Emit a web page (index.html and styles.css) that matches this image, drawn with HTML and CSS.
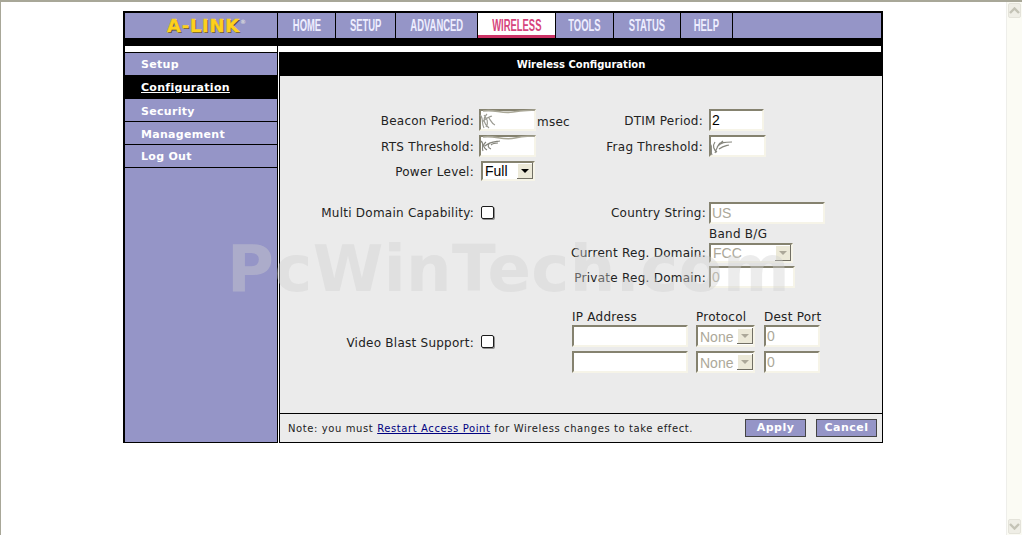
FILE: index.html
```html
<!DOCTYPE html>
<html lang="en">
<head>
  <meta charset="UTF-8">
  <title>Wireless Configuration</title>
  <link rel="stylesheet" href="styles.css">
</head>
<body>
  <div class="viewport">
    <div class="page">
      <div class="frame">

        <!-- Top bar -->
        <div class="topbar">
          <div class="logo">A-LINK<sup>&reg;</sup></div>
          <div class="tabs">
            <a class="tab tab-home"><span>HOME</span></a>
            <a class="tab tab-setup"><span>SETUP</span></a>
            <a class="tab tab-advanced"><span>ADVANCED</span></a>
            <a class="tab tab-wireless active"><span>WIRELESS</span></a>
            <a class="tab tab-tools"><span>TOOLS</span></a>
            <a class="tab tab-status"><span>STATUS</span></a>
            <a class="tab tab-help"><span>HELP</span></a>
            <div class="tab-rest"></div>
          </div>
        </div>
        <div class="strip"><div class="strip-left"></div></div>

        <div class="main">
          <!-- Side menu -->
          <div class="sidebar">
            <a class="side-item first">Setup</a>
            <a class="side-item current">Configuration</a>
            <a class="side-item low">Security</a>
            <a class="side-item low">Management</a>
            <a class="side-item">Log Out</a>
          </div>

          <div class="panel">
            <div class="title">Wireless Configuration</div>

            <div class="content">
              <div class="watermark">PcWinTech.com</div>

              <div class="section-top">
                <div class="row">
                  <label class="label-a">Beacon Period:</label>
                  <span class="scribble-wrap">
                    <input class="field w-57" type="text">
                    <svg class="scribble" width="57" height="22" viewBox="0 0 57 22"><path d="M4 2C16 0 22 5 34 3S48 2 56 1" fill="none" stroke="#a9a797" stroke-width="1.6"/><path d="M1 6C5 9 2 14 5 19M8 5C3 10 5 15 10 19M3 13C8 8 10 8 13 7M5 6C8 10 10 13 7 18M10 9C12 12 13 15 16 16" fill="none" stroke="#9b9b93" stroke-width="1.2"/></svg>
                  </span>
                  <span class="unit">msec</span>
                  <label class="label-b">DTIM Period:</label>
                  <input class="field w-55" type="text" value="2">
                </div>
                <div class="row">
                  <label class="label-a">RTS Threshold:</label>
                  <span class="scribble-wrap">
                    <input class="field w-57" type="text">
                    <svg class="scribble" width="57" height="22" viewBox="0 0 57 22"><path d="M4 2C16 0 24 6 36 3S48 2 56 1" fill="none" stroke="#a9a797" stroke-width="1.6"/><path d="M2 6C6 9 2 12 4 16M7 7C3 10 5 13 8 15M6 11C10 7 15 7 21 6M11 8C8 10 9 13 12 14M12 10C14 8 17 8 19 8" fill="none" stroke="#85857c" stroke-width="1.2"/></svg>
                  </span>
                  <span class="unit"></span>
                  <label class="label-b">Frag Threshold:</label>
                  <span class="scribble-wrap">
                    <input class="field w-57" type="text">
                    <svg class="scribble" width="57" height="22" viewBox="0 0 57 22"><path d="M1 8C4 12 1 16 3 20M6 7C3 11 5 15 8 17M8 12C12 7 16 7 23 7M10 14C14 11 16 11 20 10M11 8C8 11 8 13 6 18M14 6C12 8 10 9 9 11" fill="none" stroke="#85857c" stroke-width="1.2"/></svg>
                  </span>
                </div>
                <div class="row row-short">
                  <label class="label-a">Power Level:</label>
                  <div class="select-wrap power">
                    <select class="select"><option>Full</option></select>
                    <span class="select-btn"></span>
                  </div>
                </div>
              </div>

              <div class="section-domain">
                <div class="check-side">
                  <label class="label-a">Multi Domain Capability:</label>
                  <input class="check" type="checkbox">
                </div>
                <div class="domain-side">
                  <div class="domain-row">
                    <label class="label-c">Country String:</label>
                    <input class="field w-116 off" type="text" value="US" disabled>
                  </div>
                  <div class="band">Band B/G</div>
                  <div class="domain-row">
                    <label class="label-c">Current Reg. Domain:</label>
                    <div class="select-wrap fcc">
                      <select class="select" disabled><option>FCC</option></select>
                      <span class="select-btn off"></span>
                    </div>
                  </div>
                  <div class="domain-row private">
                    <label class="label-c">Private Reg. Domain:</label>
                    <input class="field w-86 off" type="text" value="0" disabled>
                  </div>
                </div>
              </div>

              <div class="section-video">
                <div class="check-side">
                  <label class="label-a">Video Blast Support:</label>
                  <input class="check" type="checkbox">
                </div>
                <div class="video-grid">
                  <div class="col-head">IP Address</div>
                  <div class="col-head">Protocol</div>
                  <div class="col-head">Dest Port</div>
                  <input class="field w-116" type="text">
                  <div class="select-wrap proto">
                    <select class="select" disabled><option>None</option></select>
                    <span class="select-btn off"></span>
                  </div>
                  <input class="field w-56 off" type="text" value="0" disabled>
                  <input class="field w-116" type="text">
                  <div class="select-wrap proto">
                    <select class="select" disabled><option>None</option></select>
                    <span class="select-btn off"></span>
                  </div>
                  <input class="field w-56 off" type="text" value="0" disabled>
                </div>
              </div>
            </div>

            <div class="footer">
              <div class="note">Note: you must <a href="#">Restart Access Point</a> for Wireless changes to take effect.</div>
              <button class="btn">Apply</button>
              <button class="btn">Cancel</button>
            </div>
          </div>
        </div>
      </div>
    </div>

    <!-- Scrollbar -->
    <div class="scrollbar">
      <div class="scroll-btn"><svg width="11" height="7" viewBox="0 0 11 7"><path d="M1 6L5.5 1.5L10 6" fill="none" stroke="#c4c3b6" stroke-width="2.4"/></svg></div>
      <div class="scroll-track"></div>
      <div class="scroll-btn"><svg width="11" height="7" viewBox="0 0 11 7"><path d="M1 1L5.5 5.5L10 1" fill="none" stroke="#c4c3b6" stroke-width="2.4"/></svg></div>
    </div>
  </div>
</body>
</html>
```

FILE: styles.css
```css
/* General */
html, body {
  margin: 0;
  padding: 0;
  height: 100%;
  overflow: hidden;
  background-color: #fff;
}

body {
  font-family: "DejaVu Sans", Verdana, sans-serif;
  font-size: 12px;
  letter-spacing: 0.25px;
  color: #222;
}

.viewport {
  display: flex;
  height: 533px;
  border-top: 2px solid #a8a798;
  border-left: 1px solid #a8a798;
}

.page {
  flex: 1;
  padding: 9px 0 0 122px;
}

.frame {
  width: 760px;
  height: 432px;
  display: flex;
  flex-direction: column;
}

/* Top bar */
.topbar {
  display: flex;
  height: 25px;
  padding-bottom: 8px;
  background-color: #000;
  border: 2px solid #000;
  border-bottom: none;
}

.logo {
  box-sizing: border-box;
  width: 152px;
  padding-left: 11px;
  background-color: #9595c7;
  text-align: center;
  font-family: "DejaVu Sans", sans-serif;
  font-weight: bold;
  font-size: 18px;
  line-height: 25px;
  letter-spacing: 0.7px;
  color: #fdd11c;
  text-shadow: 1px 1px 0 #4f4a38;
  -webkit-text-stroke: 0.4px #fdd11c;
}

.logo sup {
  font-size: 6px;
  line-height: 0;
  color: #ddd;
  letter-spacing: 0;
  text-shadow: none;
  -webkit-text-stroke: 0;
  vertical-align: 8px;
}

.tabs {
  flex: 1;
  display: flex;
  gap: 1px;
  margin-left: 1px;
}

.tab {
  display: flex;
  justify-content: center;
  box-sizing: border-box;
  height: 25px;
  background-color: #9595c7;
  color: #eef;
  font-family: "Liberation Sans", Arial, sans-serif;
  font-weight: bold;
  font-size: 16px;
  line-height: 26px;
  letter-spacing: 0;
  white-space: nowrap;
}

.tab span {
  display: block;
  flex: none;
  transform: scaleX(0.59);
}

.tab-home { width: 57px; }
.tab-setup { width: 59px; }
.tab-advanced { width: 81px; }
.tab-wireless { width: 77px; }
.tab-tools { width: 57px; }
.tab-status { width: 66px; }
.tab-help { width: 51px; }

.tab.active {
  background-color: #fff;
  color: #d6457c;
  border-bottom: 3px solid #cc3366;
}

.tab-rest {
  flex: 1;
  background-color: #9595c7;
}

.strip {
  height: 6px;
  background-color: #fff;
  border-left: 2px solid #000;
  border-right: 2px solid #000;
}

.strip-left {
  width: 152px;
  height: 6px;
  border-right: 1px solid #000;
}

/* Side menu */
.main {
  flex: 1;
  display: flex;
  background-color: #fff;
}

.sidebar {
  width: 152px;
  background-color: #9595c7;
  border-left: 2px solid #000;
  border-right: 1px solid #000;
  border-bottom: 1px solid #000;
  font-weight: bold;
  font-size: 11px;
  letter-spacing: 0.3px;
}

.side-item {
  display: flex;
  align-items: center;
  box-sizing: border-box;
  height: 23px;
  padding-left: 16px;
  padding-top: 1px;
  color: #fff;
  border-bottom: 1px solid #000;
}

.side-item.low {
  padding-top: 3px;
}

.side-item.first {
  height: 23px;
  padding-top: 0;
  border-top: 1px solid #000;
  border-bottom: none;
}

.side-item.current {
  height: 24px;
  padding-top: 0;
  background-color: #000;
  text-decoration: underline;
  border-bottom: none;
}

/* Main panel */
.panel {
  flex: 1;
  display: flex;
  flex-direction: column;
  margin-left: 1px;
  background-color: #ebebeb;
  border-left: 1px solid #000;
  border-right: 1px solid #000;
  border-bottom: 1px solid #000;
}

.title {
  height: 24px;
  margin-left: -1px;
  margin-right: -1px;
  background-color: #000;
  color: #fff;
  text-align: center;
  font-weight: bold;
  font-size: 10px;
  line-height: 26px;
  letter-spacing: 0;
}

.content {
  flex: 1;
  position: relative;
  padding-top: 31px;
}

.watermark {
  position: absolute;
  top: 153px;
  left: -53px;
  font-family: "DejaVu Sans", sans-serif;
  font-weight: bold;
  font-size: 64px;
  line-height: 80px;
  letter-spacing: 0.4px;
  white-space: nowrap;
  color: rgba(208, 208, 208, 0.4);
  pointer-events: none;
  z-index: 2;
}

.row {
  display: flex;
  align-items: center;
  height: 26px;
}

.row-short {
  height: 24px;
}

.label-a {
  width: 194px;
  margin-right: 5px;
  padding-top: 2px;
  text-align: right;
  flex: none;
  white-space: nowrap;
}

.label-b {
  width: 132px;
  margin-right: 6px;
  padding-top: 2px;
  text-align: right;
}

.label-c {
  width: 170px;
  margin-right: 3px;
  text-align: right;
  white-space: nowrap;
}

.private .label-c {
  padding-top: 2px;
}

.unit {
  width: 34px;
  margin-left: 1px;
  padding-top: 3px;
}

/* Form controls */
.field {
  box-sizing: border-box;
  height: 22px;
  margin: 0;
  padding: 0 1px;
  border: 2px solid;
  border-color: #85826f #f6f4e8 #f6f4e8 #85826f;
  background-color: #fff;
  font-family: "Liberation Sans", Arial, sans-serif;
  font-size: 14px;
  color: #000;
  border-radius: 0;
  outline: none;
}

.field.off {
  color: #aca899;
}

.w-55 { width: 55px; }
.w-56 { width: 56px; }
.w-57 { width: 57px; }
.w-86 { width: 86px; }
.w-116 { width: 116px; }

.scribble-wrap {
  position: relative;
  display: block;
  height: 22px;
}

.scribble {
  position: absolute;
  top: 0;
  left: 0;
}

.select-wrap {
  position: relative;
  box-sizing: border-box;
  height: 20px;
  border: 2px solid;
  border-color: #85826f #f6f4e8 #f6f4e8 #85826f;
  background-color: #fff;
}

.select {
  display: block;
  width: 100%;
  height: 16px;
  padding: 0 0 0 2px;
  border: none;
  outline: none;
  appearance: none;
  -webkit-appearance: none;
  background: transparent;
  font-family: "Liberation Sans", Arial, sans-serif;
  font-size: 14px;
  line-height: 16px;
  color: #000;
  opacity: 1;
}

.select:disabled {
  color: #aca899;
}

.select-btn {
  position: absolute;
  top: 0;
  right: 0;
  width: 16px;
  height: 16px;
  box-sizing: border-box;
  background-color: #ece9d8;
  border-right: 1px solid #716f64;
  border-bottom: 1px solid #716f64;
  box-shadow: inset 1px 1px 0 #fff;
}

.select-btn::after {
  content: "";
  position: absolute;
  top: 6px;
  left: 4px;
  border-left: 4px solid transparent;
  border-right: 4px solid transparent;
  border-top: 4px solid #000;
}

.select-btn.off::after {
  border-top-color: #aca899;
}

.power {
  width: 54px;
  margin-left: 2px;
}

.fcc {
  width: 84px;
}

.proto {
  width: 59px;
}

.check {
  appearance: none;
  -webkit-appearance: none;
  box-sizing: border-box;
  width: 13px;
  height: 13px;
  margin: 0;
  background-color: #fff;
  border: 1px solid #1c1c1c;
  border-radius: 2px;
  box-shadow: 1px 1px 0 #8f8f8f;
  flex: none;
}

/* Sections */
.section-domain {
  display: flex;
  margin-top: 19px;
  height: 86px;
}

.check-side {
  width: 216px;
  display: flex;
  align-items: center;
  align-self: flex-start;
  height: 20px;
}

.check-side .check {
  margin-left: 2px;
}

.domain-side {
  display: flex;
  flex-direction: column;
  margin-left: 40px;
}

.domain-row {
  display: flex;
  align-items: center;
  height: 22px;
}

.domain-row.private {
  margin-top: 3px;
}

.band {
  height: 19px;
  padding-top: 1px;
  box-sizing: border-box;
  line-height: 19px;
  margin-left: 173px;
}

.section-video {
  display: flex;
  margin-top: 21px;
}

.section-video .check-side {
  align-self: center;
  margin-top: 1px;
}

.video-grid {
  display: grid;
  grid-template-columns: 116px 60px 56px;
  column-gap: 8px;
  row-gap: 4px;
  margin-left: 76px;
}

.col-head {
  height: 13px;
  line-height: 16px;
  margin-bottom: -1px;
  white-space: nowrap;
}

.video-grid .select-wrap {
  height: 22px;
  padding-top: 2px;
}

.video-grid .select-btn {
  top: 1px;
}

/* Footer */
.footer {
  display: flex;
  align-items: center;
  height: 28px;
  border-top: 1px solid #000;
  padding: 0 5px 0 8px;
  font-size: 10px;
  letter-spacing: 0.6px;
}

.note {
  flex: 1;
  white-space: nowrap;
}

.note a {
  color: #000080;
}

.btn {
  box-sizing: border-box;
  width: 61px;
  height: 18px;
  margin: -1px 0 0 10px;
  padding: 0;
  border: 1px solid #444;
  background-color: #9595c7;
  color: #fff;
  font-family: "DejaVu Sans", sans-serif;
  font-weight: bold;
  font-size: 11px;
  letter-spacing: 0.5px;
}

/* Scrollbar */
.scrollbar {
  width: 16px;
  display: flex;
  flex-direction: column;
  box-sizing: border-box;
  background-color: #fbfbf4;
  border-left: 1px solid #eeeeea;
  padding: 1px;
}

.scroll-btn {
  height: 15px;
  display: flex;
  align-items: center;
  justify-content: center;
  background-color: #efeee6;
  border: 1px solid #e4e3da;
  border-radius: 2px;
  box-sizing: border-box;
}

.scroll-track {
  flex: 1;
}
```
